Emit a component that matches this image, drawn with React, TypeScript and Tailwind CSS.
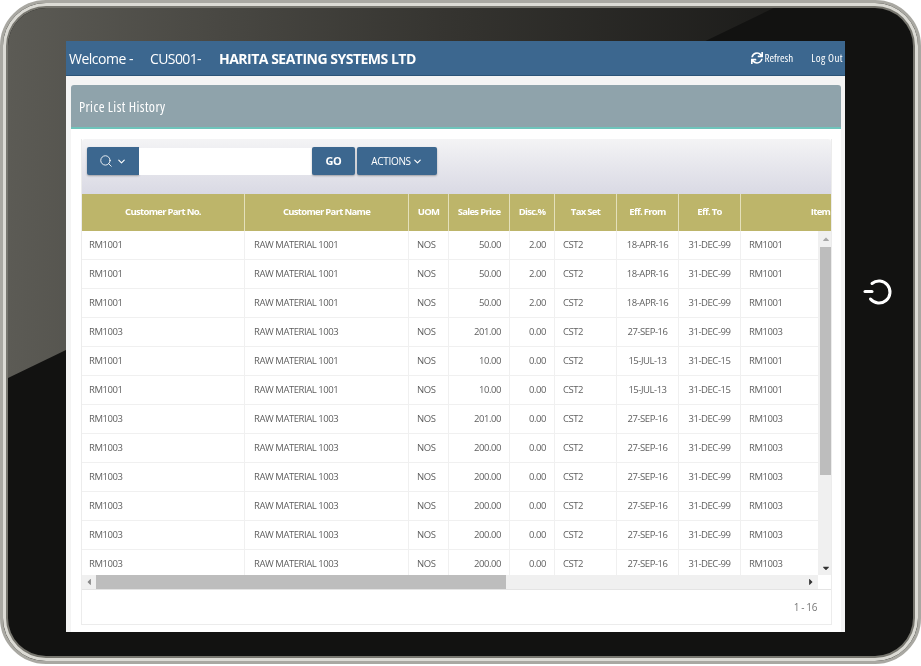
import { ChevronDown, Search } from "lucide-react"
import { FaSync, FaCaretUp, FaCaretDown, FaCaretLeft, FaCaretRight } from "react-icons/fa"

const gridCols = "grid grid-cols-[163px_164px_40px_61px_45px_62px_62px_62px_160px]"

const rows = [
  ["RM1001", "RAW MATERIAL 1001", "NOS", "50.00", "2.00", "CST2", "18-APR-16", "31-DEC-99", "RM1001"],
  ["RM1001", "RAW MATERIAL 1001", "NOS", "50.00", "2.00", "CST2", "18-APR-16", "31-DEC-99", "RM1001"],
  ["RM1001", "RAW MATERIAL 1001", "NOS", "50.00", "2.00", "CST2", "18-APR-16", "31-DEC-99", "RM1001"],
  ["RM1003", "RAW MATERIAL 1003", "NOS", "201.00", "0.00", "CST2", "27-SEP-16", "31-DEC-99", "RM1003"],
  ["RM1001", "RAW MATERIAL 1001", "NOS", "10.00", "0.00", "CST2", "15-JUL-13", "31-DEC-15", "RM1001"],
  ["RM1001", "RAW MATERIAL 1001", "NOS", "10.00", "0.00", "CST2", "15-JUL-13", "31-DEC-15", "RM1001"],
  ["RM1003", "RAW MATERIAL 1003", "NOS", "201.00", "0.00", "CST2", "27-SEP-16", "31-DEC-99", "RM1003"],
  ["RM1003", "RAW MATERIAL 1003", "NOS", "200.00", "0.00", "CST2", "27-SEP-16", "31-DEC-99", "RM1003"],
  ["RM1003", "RAW MATERIAL 1003", "NOS", "200.00", "0.00", "CST2", "27-SEP-16", "31-DEC-99", "RM1003"],
  ["RM1003", "RAW MATERIAL 1003", "NOS", "200.00", "0.00", "CST2", "27-SEP-16", "31-DEC-99", "RM1003"],
  ["RM1003", "RAW MATERIAL 1003", "NOS", "200.00", "0.00", "CST2", "27-SEP-16", "31-DEC-99", "RM1003"],
  ["RM1003", "RAW MATERIAL 1003", "NOS", "200.00", "0.00", "CST2", "27-SEP-16", "31-DEC-99", "RM1003"],
]

const headers = ["Customer Part No.", "Customer Part Name", "UOM", "Sales Price", "Disc.%", "Tax Set", "Eff. From", "Eff. To", "Item"]

const cellAlign = ["pl-[7px]", "pl-[9px]", "pl-2", "justify-end pr-2", "justify-end pr-2", "pl-2", "justify-center", "justify-center", "pl-2"]

function TableRow({ row }: { row: string[] }) {
  return (
    <div className={`${gridCols} h-[29px] shrink-0 border-b border-[#f0f0f0]`}>
      {row.map((value, i) => (
        <div key={i} className={`flex items-center whitespace-nowrap border-r border-[#f0f0f0] pt-[1px] text-[9.5px] tracking-[-0.45px] text-[#5f5f5f] ${cellAlign[i]}`}>
          {value}
        </div>
      ))}
    </div>
  )
}

export default function App() {
  return (
    <div className="relative h-[666px] w-[921px] overflow-hidden bg-white font-['Open_Sans',sans-serif] blur-[0.35px]">
      {/* tablet body */}
      <div className="relative mb-[2px] h-[664px] w-[921px] overflow-hidden rounded-[46px] border-[3px] border-[#a9a8a2] bg-[#121211] shadow-[inset_0_0_0_3px_#dcdbd5,inset_0_0_0_5px_#77766f]">
        {/* glare */}
        <div className="absolute inset-[5px] rounded-[38px] bg-gradient-to-r from-[#5c5b55] via-[#34332f] to-[#131312] [clip-path:polygon(0_0,84.6%_0,0_57.1%)]" />

        <div className="relative flex h-full">
          <div className="ml-[63px] mt-[38px] flex h-[591px] w-[779px] flex-col bg-white">
            <header className="flex h-[35px] shrink-0 items-center justify-between border-b border-[#2c5478] bg-[#3c678f] pl-[3px] pr-[2px] text-white">
              <div className="flex items-center text-[14px] tracking-[-0.6px]">
                <span className="w-[81px] tracking-[-0.5px]">Welcome -</span>
                <span className="w-[69px]">CUS001-</span>
                <span className="font-bold tracking-[-0.5px]">HARITA SEATING SYSTEMS LTD</span>
              </div>
              <div className="flex items-center gap-[18px] text-[11px] [font-stretch:75%]">
                <span className="flex items-center gap-[1px]">
                  <FaSync className="h-[12px] w-[12px]" />
                  Refresh
                </span>
                <span className="tracking-[0.4px]">Log Out</span>
              </div>
            </header>

            <div className="flex min-h-0 flex-1 flex-col bg-[#f4f4f4] pl-[5px] pr-[4px] pt-[9px]">
              <div className="flex h-[44px] shrink-0 items-center rounded-t-[3px] border-b-2 border-[#6fc4bb] bg-[#8fa3ab] pl-[8px] text-[14px] tracking-[0.4px] text-white [font-stretch:75%]">
                Price List History
              </div>

              <div className="min-h-0 flex-1 bg-white pl-[10px] pr-[9px] pt-[10px]">
                <div className="flex h-[486px] flex-col border-x border-b border-[#ececec]">
                  {/* toolbar */}
                  <div className="flex h-[55px] shrink-0 items-start rounded-t-[3px] bg-gradient-to-b from-[#f4f4f5] to-[#d9d9e4] pl-[5px] pt-[8px]">
                    <div className="flex">
                      <button className="flex h-[28px] w-[52px] items-center justify-center gap-[3px] rounded-l-[2px] bg-[#3c678f] text-white shadow-[0_1px_2px_rgba(0,0,0,0.3)]">
                        <Search className="h-[14px] w-[14px]" strokeWidth={1.5} />
                        <ChevronDown className="h-[11px] w-[11px]" strokeWidth={2.5} />
                      </button>
                      <div className="mt-[1px] h-[27px] w-[173px] bg-white" />
                    </div>
                    <button className="h-[28px] w-[43px] rounded-[2px] bg-[#3c678f] text-[11px] font-bold tracking-[-0.3px] text-white shadow-[0_1px_2px_rgba(0,0,0,0.3)]">GO</button>
                    <button className="ml-[2px] flex h-[28px] w-[80px] items-center justify-center gap-[1px] rounded-[2px] bg-[#3c678f] text-[10px] tracking-[-0.3px] text-white shadow-[0_1px_2px_rgba(0,0,0,0.3)]">
                      ACTIONS
                      <ChevronDown className="h-[11px] w-[11px]" strokeWidth={2.5} />
                    </button>
                  </div>

                  {/* table header */}
                  <div className="h-[37px] shrink-0 overflow-hidden bg-[#bdb56a]">
                    <div className={`${gridCols} h-full`}>
                      {headers.map((h) => (
                        <div key={h} className="flex items-center justify-center whitespace-nowrap border-r border-[#e4e0bb] text-[9.5px] font-bold tracking-[-0.7px] text-white">
                          {h}
                        </div>
                      ))}
                    </div>
                  </div>

                  {/* table body with scrollbars */}
                  <div className="flex h-[344px] shrink-0">
                    <div className="min-w-0 flex-1 overflow-hidden">
                      {rows.map((row, i) => (
                        <TableRow key={i} row={row} />
                      ))}
                    </div>
                    <div className="flex w-[13px] shrink-0 flex-col bg-[#f0f0f0] pl-[2px]">
                      <div className="flex h-[16px] items-center justify-center text-[#a8a8a8]">
                        <FaCaretUp className="h-[10px] w-[10px]" />
                      </div>
                      <div className="h-[228px] bg-[#bdbdbd]" />
                      <div className="flex-1" />
                      <div className="flex h-[14px] items-center justify-center text-[#333]">
                        <FaCaretDown className="h-[10px] w-[10px]" />
                      </div>
                    </div>
                  </div>

                  <div className="flex h-[15px] shrink-0 border-b border-[#e4e4e4]">
                    <div className="flex min-w-0 flex-1 items-center bg-[#f0f0f0]">
                      <div className="flex w-[14px] shrink-0 items-center justify-center text-[#888]">
                        <FaCaretLeft className="h-[10px] w-[10px]" />
                      </div>
                      <div className="h-full w-[410px] bg-[#bdbdbd]" />
                      <div className="flex-1" />
                      <div className="flex w-[14px] shrink-0 items-center justify-center text-[#333]">
                        <FaCaretRight className="h-[10px] w-[10px]" />
                      </div>
                    </div>
                    <div className="w-[13px] shrink-0 bg-white" />
                  </div>

                  <div className="flex flex-1 items-center justify-end pr-[14px] text-[10px] tracking-[-0.4px] text-[#777]">1 - 16</div>
                </div>
              </div>
            </div>
          </div>

          {/* home button */}
          <div className="ml-[18px] mt-[275px] h-fit">
            <svg width="30" height="30" viewBox="0 0 30 30" fill="none" stroke="white" strokeWidth="3" strokeLinecap="round">
              <path d="M9 5.5A11 11 0 1 1 7.5 21" />
              <path d="M2 13.5H9" />
            </svg>
          </div>
        </div>
      </div>
    </div>
  )
}
